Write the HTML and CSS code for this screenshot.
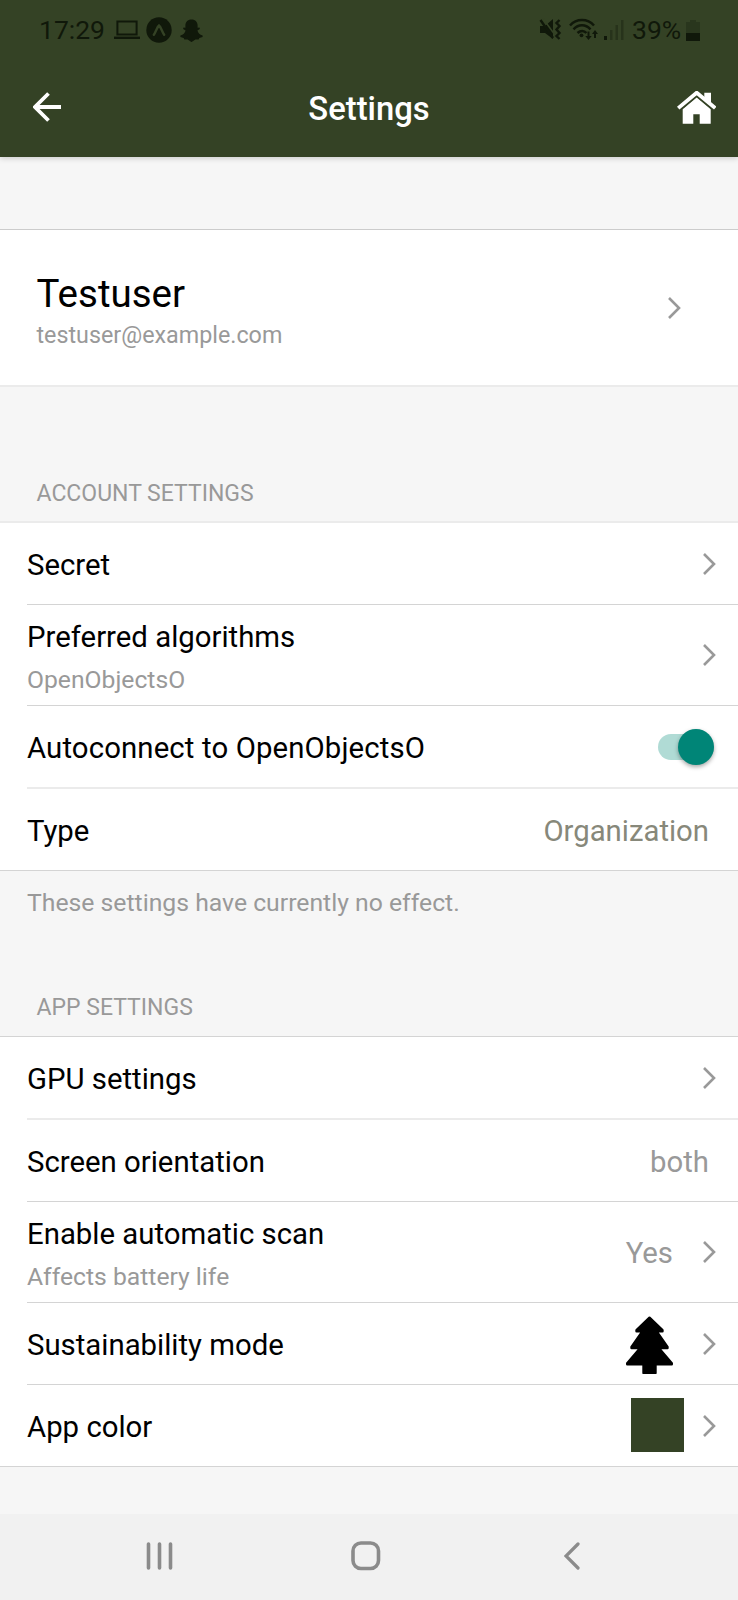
FILE: index.html
```html
<!DOCTYPE html>
<html lang="en">
<head>
<meta charset="utf-8">
<title>Settings</title>
<link rel="stylesheet" href="styles.css">
</head>
<body>
<svg class="defs" aria-hidden="true">
  <symbol id="chevron" viewBox="0 0 14 24"><path d="M2 2l10 10L2 22" fill="none" stroke="currentColor" stroke-width="2.6"/></symbol>
</svg>
<div class="screen">
  <header class="header">
    <div class="status">
      <div class="status-left">
        <span class="clock">17:29</span>
        <svg class="ic-laptop" width="26" height="20" viewBox="0 0 26 20"><path d="M3.4 1.4h19.2v13.2H3.4z" fill="none" stroke="currentColor" stroke-width="2"/><path d="M0 16.600h26V19H0z" fill="currentColor"/></svg>
        <svg class="ic-expo" width="26" height="26" viewBox="0 0 26 26"><circle cx="13" cy="13" r="12.7" fill="currentColor"/><path d="M7.800 17.800C9.800 15 11 10 13 8.500c2 1.500 3.200 6.500 5.200 9.300" fill="none" stroke="#344225" stroke-width="2.400" stroke-linecap="round"/></svg>
        <svg class="ic-snap" width="23" height="23" viewBox="0 0 23 23"><path d="M11.500.5c4 0 6.100 2.700 6.100 6v2.300l1.900-.4.400 1.500-2.500 1.500c.8 2.700 2.300 4 5.200 5v1.600l-3.200 1-.8 1.500-3.200-.1-3.900 2.700-3.900-2.700-3.200.1-.8-1.500-3.200-1v-1.600c2.900-1 4.400-2.300 5.200-5L3.100 9.900l.4-1.500 1.900.4V6.500c0-3.300 2.100-6 6.100-6z" fill="currentColor"/></svg>
      </div>
      <div class="status-right">
        <svg class="ic-mute" width="23" height="24" viewBox="0 0 23 24"><path d="M1 8h5l8-7v20l-8-6H1z" fill="currentColor"/><path d="M4 .5L17.500 19" stroke="#344225" stroke-width="1.500"/><path d="M1.500 2L14 20" stroke="currentColor" stroke-width="2.400"/><path d="M20.500 2l-3 3 3 3-3 3.500 3 3.500-3 3 3 3" fill="none" stroke="currentColor" stroke-width="2.400"/></svg>
        <svg class="ic-wifi" width="29" height="24" viewBox="0 0 29 24"><g fill="none" stroke="currentColor" stroke-width="2.500"><path d="M1 7.500C7.500.2 18.500.2 25 7.500"/><path d="M4.500 11.300c5-5.300 12-5.300 17 0"/><path d="M8.500 15c3-2.800 6.500-2.800 9 0"/></g><circle cx="12.500" cy="17.300" r="1.900" fill="currentColor"/><path d="M19.500 13.500v6M26 20v-6" stroke="currentColor" stroke-width="2"/><path d="M16.300 18h6.400l-3.200 4zM23 16h6l-3-4z" fill="currentColor"/></svg>
        <svg class="ic-signal" width="20" height="22" viewBox="0 0 20 22"><path d="M0 17h3v4H0z" fill="currentColor"/><path d="M6 11h2.500v10H6zM11.500 6H14v15h-2.500zM17 1h2.500v20H17z" fill="currentColor" opacity=".35"/></svg>
        <span class="percent">39%</span>
        <svg class="ic-battery" width="14" height="23" viewBox="0 0 14 23"><path d="M4 1h6v2h4v11H0V3h4z" fill="currentColor" opacity=".28"/><path d="M0 14h14v8H0z" fill="currentColor"/></svg>
      </div>
    </div>
    <div class="bar">
      <svg class="back" width="29" height="30" viewBox="0 0 29 30"><path d="M28 15H2M15.500 1.500L2 15l13.500 13.500" fill="none" stroke="currentColor" stroke-width="3.800"/></svg>
      <h1 class="title">Settings</h1>
      <svg class="home" width="39" height="33" viewBox="0 0 39 33"><path d="M5.700 18.300l14-11.800 14 11.800V32.700H22.700V23.300h-6.400v9.400H5.700z" fill="currentColor"/><path d="M1.200 17.100l18.500-15.400 18.500 15.400" fill="none" stroke="currentColor" stroke-width="3.800"/><path d="M4.500 18.200l15.200-12.700 15.200 12.700" fill="none" stroke="#344225" stroke-width=".8"/><path d="M27.300 1.700H34v10.500l-6.700-5.600z" fill="currentColor"/></svg>
    </div>
  </header>

  <main class="content">
    <section class="profile">
      <div class="profile-text">
        <div class="name">Testuser</div>
        <div class="mail">testuser@example.com</div>
      </div>
      <svg class="chev"><use href="#chevron"/></svg>
    </section>

    <h2 class="group-title first">ACCOUNT SETTINGS</h2>
    <section class="group soft-top">
      <div class="row"><span class="label">Secret</span><svg class="chev"><use href="#chevron"/></svg></div>
      <div class="row tall line"><div class="stack"><span class="label">Preferred algorithms</span><span class="sub">OpenObjectsO</span></div><svg class="chev"><use href="#chevron"/></svg></div>
      <div class="row line"><span class="label wide">Autoconnect to OpenObjectsO</span><span class="switch"><span class="thumb"></span></span></div>
      <div class="row line soft"><span class="label">Type</span><span class="value olive">Organization</span></div>
    </section>
    <p class="note">These settings have currently no effect.</p>

    <h2 class="group-title second">APP SETTINGS</h2>
    <section class="group">
      <div class="row"><span class="label">GPU settings</span><svg class="chev"><use href="#chevron"/></svg></div>
      <div class="row line soft"><span class="label">Screen orientation</span><span class="value">both</span></div>
      <div class="row tall line"><div class="stack"><span class="label">Enable automatic scan</span><span class="sub">Affects battery life</span></div><span class="value with-chev">Yes</span><svg class="chev"><use href="#chevron"/></svg></div>
      <div class="row line"><span class="label">Sustainability mode</span><svg class="tree" width="47" height="58" viewBox="0 0 47 58"><path d="M23.500 1.700L36.500 14.200v1H30.500L41.500 31v1H32.800L45.800 47.200v1H29.500V57H17.500v-8.800H1.200v-1L14.200 32H5.500v-1L16.500 15.200h-6v-1z" fill="#000" stroke="#000" stroke-width="2.400" stroke-linejoin="round"/></svg><svg class="chev"><use href="#chevron"/></svg></div>
      <div class="row line"><span class="label">App color</span><span class="swatch"></span><svg class="chev"><use href="#chevron"/></svg></div>
    </section>
  </main>

  <nav class="nav">
    <svg width="28" height="28" viewBox="0 0 28 28"><path d="M2.500 2v24M13.500 2v24M24.500 2v24" stroke="currentColor" stroke-width="3.600" stroke-linecap="round"/></svg>
    <svg class="nav-home" width="30" height="30" viewBox="0 0 30 30"><rect x="2" y="2" width="25.500" height="25.500" rx="8" fill="none" stroke="currentColor" stroke-width="3.600"/></svg>
    <svg width="16" height="28" viewBox="0 0 16 28"><path d="M14 2L2 14l12 12" fill="none" stroke="currentColor" stroke-width="3.200" stroke-linecap="round"/></svg>
  </nav>
</div>
</body>
</html>
```
FILE: styles.css
```css
* { box-sizing: border-box; }
body { margin: 0; background: #f6f6f6; font-family: Roboto, sans-serif; color: #000; }
svg { display: block; flex: none; }
.defs { width: 0; height: 0; position: absolute; }
.screen { width: 738px; height: 1600px; display: flex; flex-direction: column; }

.header { height: 157px; background: #344225; box-shadow: 0 1px 6px rgba(0,0,0,.2); }
.status { height: 60px; padding: 0 38px 0 39px; display: flex; justify-content: space-between; color: #10180a; font-size: 26.500px; line-height: 60px; }
.status-left, .status-right { display: flex; align-items: center; }
.clock { width: 75px; white-space: nowrap; }
.ic-expo { margin-left: 6px; }
.ic-snap { margin-left: 8px; }
.ic-wifi { margin-left: 7px; }
.ic-signal { margin-left: 6px; }
.percent { width: 49px; margin: 0 5px 0 8px; white-space: nowrap; }

.bar { height: 97px; padding: 0 22px 3px 33px; display: flex; align-items: center; justify-content: space-between; color: #fff; }
.title { margin: 4px 1px 0 0; font-size: 32.800px; font-weight: 500; line-height: 40px; }

.content { flex: none; height: 1357px; padding-top: 72px; }
.profile { height: 158px; padding: 0 57px 0 36.500px; display: flex; align-items: center; justify-content: space-between; background: #fff; border-top: 1px solid #ccc; border-bottom: 2px solid #ebebeb; }
.name { margin-top: 7px; font-size: 38.500px; line-height: 48px; }
.mail { font-size: 23.300px; line-height: 34px; color: #999; }
.chev { width: 14px; height: 24px; color: #999; }

.group-title { margin: 0; padding-left: 36.500px; font-size: 23px; font-weight: 400; line-height: 28px; color: #999; }
.first { height: 134px; padding-top: 93px; }
.second { height: 105px; padding-top: 63px; }
.group { background: #fff; border-top: 1px solid #d4d4d4; border-bottom: 1px solid #d4d4d4; }
.soft-top { border-top: 2px solid #ebebeb; }
.row { height: 81px; margin-left: 27px; padding-right: 22px; display: flex; align-items: center; }
.line { height: 82px; border-top: 1px solid #d4d4d4; }
.line.soft { height: 83px; border-top: 2px solid #ebebeb; }
.tall { height: 101px; }
.label { flex: 1; padding-top: 3px; font-size: 29.350px; line-height: 36px; white-space: nowrap; }
.wide { letter-spacing: .12px; }
.soft .label, .soft .value { padding-top: 2px; }
.stack { flex: 1; padding-top: 4px; display: flex; flex-direction: column; }
.stack .label { flex: none; padding-top: 0; }
.sub { margin-top: 10px; font-size: 24.700px; line-height: 30px; color: #999; }
.value { padding-top: 3px; margin-right: 7px; font-size: 29.300px; line-height: 36px; color: #999; }
.olive { color: #87887a; }
.with-chev { margin-right: 29px; padding-top: 2px; }
.tree { margin: 2px 29.500px 0 0; }
.swatch { width: 53px; height: 54px; margin: -1px 18px 0 0; background: #344225; }
.switch { width: 56px; height: 26px; margin-right: 2px; border-radius: 13px; background: #b0dbd5; }
.thumb { display: block; width: 36px; height: 36px; margin: -5px 0 0 20px; border-radius: 50%; background: #008577; box-shadow: 0 2px 4px rgba(0,0,0,.35); }
.note { margin: 0; height: 60px; padding: 16px 0 0 27px; font-size: 24.750px; line-height: 32px; color: #999; }

.nav { height: 86px; padding: 0 158px 3px 146px; display: flex; align-items: center; color: #8b8b8b; background: #f1f1f1; }
.nav-home { margin: 0 auto 0 177px; }
```
